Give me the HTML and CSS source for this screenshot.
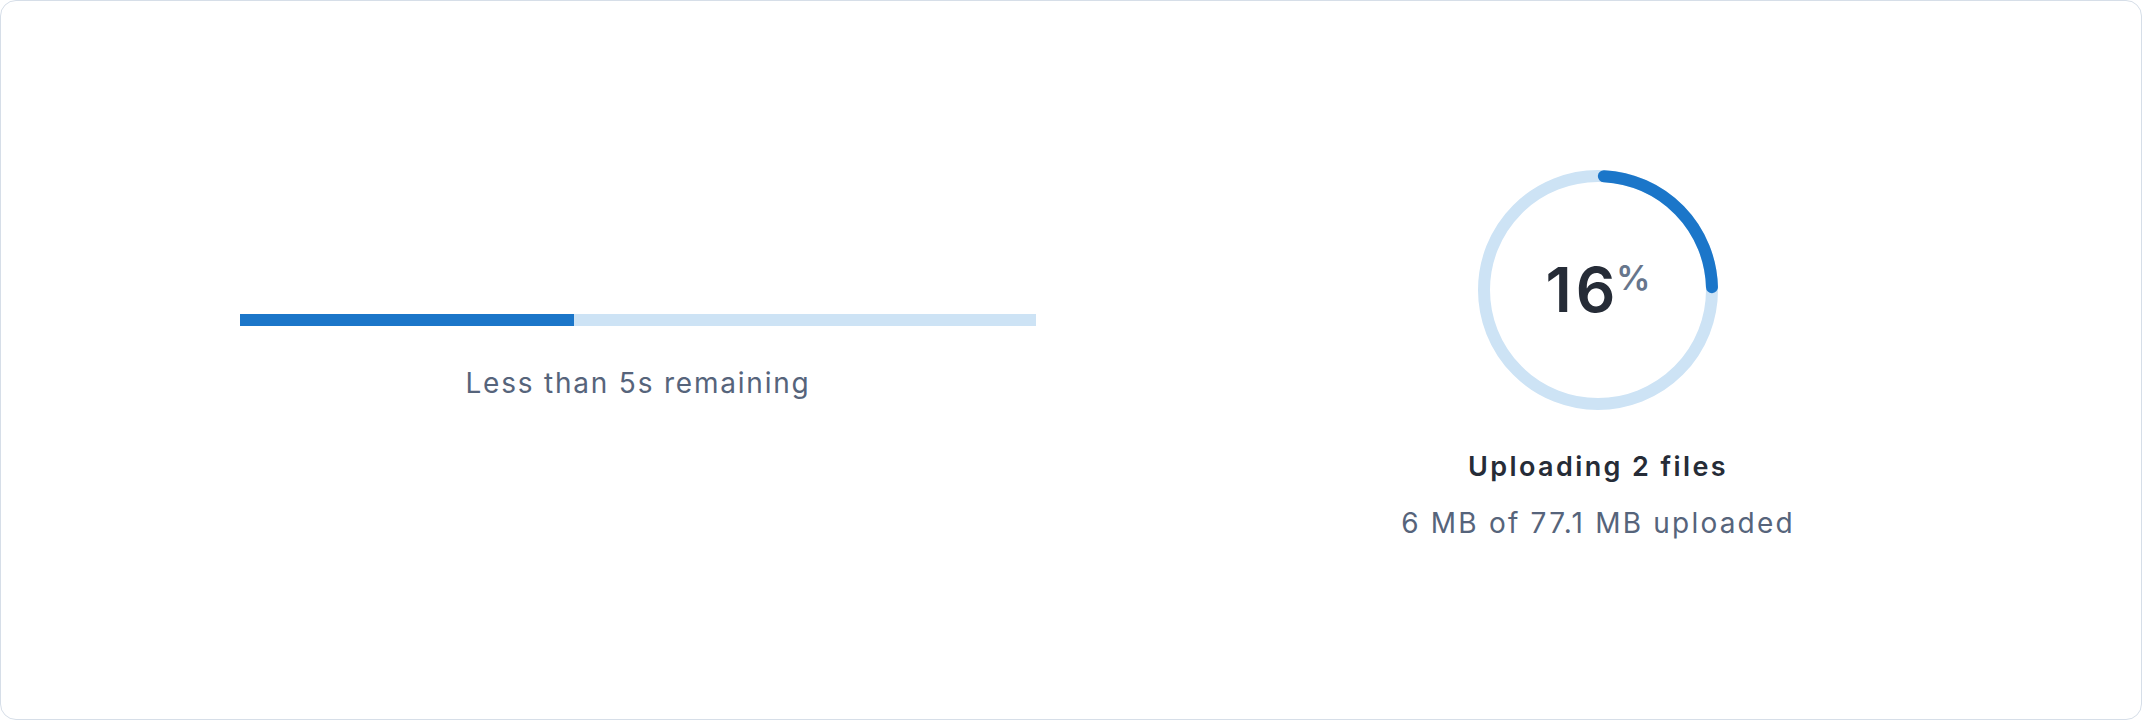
FILE: index.html
```html
<!DOCTYPE html>
<html lang="en">
<head>
<meta charset="utf-8">
<title>Upload progress</title>
<link rel="stylesheet" href="styles.css">
</head>
<body>
<div class="card">
  <section class="linear">
    <div class="track"><div class="fill" style="width:42%"></div></div>
    <p class="remaining">Less than 5s remaining</p>
  </section>
  <section class="radial">
    <div class="ring">
      <svg class="ring-svg" width="240" height="240" viewBox="0 0 240 240">
        <circle class="ring-track" cx="120" cy="120" r="114"></circle>
        <circle class="ring-fill" cx="120" cy="120" r="114" transform="rotate(-90 120 120)"></circle>
      </svg>
      <div class="value"><span class="num">16</span><span class="pct">%</span></div>
    </div>
    <p class="title">Uploading 2 files</p>
    <p class="sub">6 MB of 77.1 MB uploaded</p>
  </section>
</div>
</body>
</html>
```
FILE: styles.css
```css
html, body {
  margin: 0;
  padding: 0;
  background: #ffffff;
}
body {
  font-family: Inter, "Noto Sans", sans-serif;
}
.card {
  box-sizing: border-box;
  width: 2142px;
  height: 720px;
  border: 1px solid #d6dee8;
  border-radius: 16px;
  display: flex;
  align-items: flex-start;
  padding-left: 239px;
  gap: 362px;
}
.linear {
  width: 796px;
  padding-top: 313px;
  display: flex;
  flex-direction: column;
  align-items: center;
}
.track {
  width: 100%;
  height: 12px;
  background: #cde3f5;
  display: flex;
}
.fill {
  height: 100%;
  background: #1b76c9;
}
.remaining {
  margin: 37px 0 0;
  font-size: 28px;
  line-height: 40px;
  letter-spacing: 1.8px;
  color: #56647b;
}
.radial {
  width: 400px;
  padding-top: 169px;
  display: flex;
  flex-direction: column;
  align-items: center;
}
.ring {
  position: relative;
  width: 240px;
  height: 240px;
}
.ring-svg {
  display: block;
}
.ring-track {
  fill: none;
  stroke: #cde3f5;
  stroke-width: 12;
}
.ring-fill {
  fill: none;
  stroke: #1b76c9;
  stroke-width: 12;
  stroke-linecap: round;
  stroke-dasharray: 170 716;
  stroke-dashoffset: -6;
}
.value {
  position: absolute;
  inset: 0;
  display: flex;
  align-items: center;
  justify-content: center;
}
.num {
  font-size: 62px;
  font-weight: 600;
  color: #262c37;
  line-height: 1;
  letter-spacing: 4px;
}
.pct {
  font-size: 34px;
  font-weight: 600;
  color: #67768c;
  align-self: flex-start;
  margin-top: 91px;
  margin-left: -3px;
  line-height: 1;
}
.title {
  margin: 40px 0 0;
  font-size: 27px;
  line-height: 34px;
  font-weight: 600;
  letter-spacing: 2.4px;
  color: #262c37;
}
.sub {
  margin: 21px 0 0;
  font-size: 28px;
  line-height: 36px;
  letter-spacing: 2.2px;
  color: #56647b;
}
```
